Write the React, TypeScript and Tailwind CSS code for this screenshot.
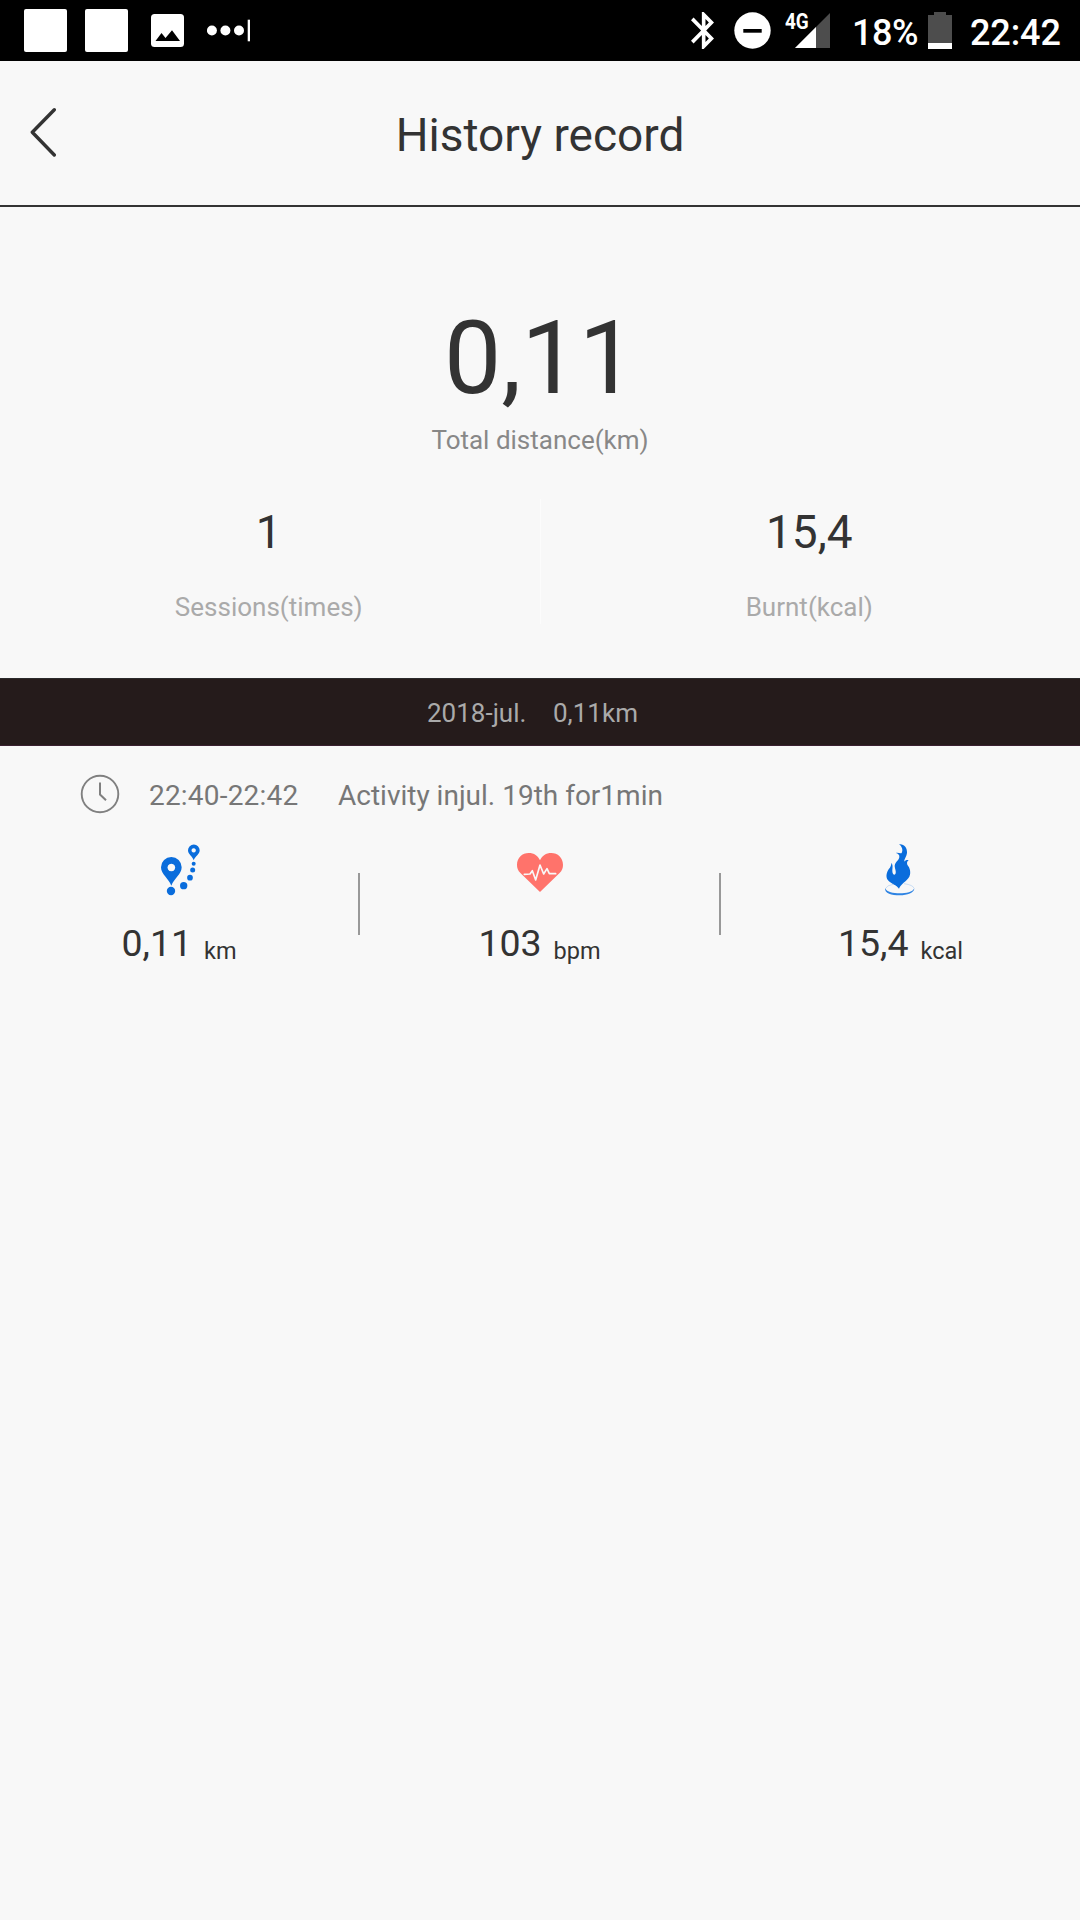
import React from "react";

function StatusBar() {
  return (
    <div className="flex h-[61px] items-center overflow-hidden bg-black pl-[24px] font-medium text-white">
      <div className="size-[43px] rounded-[2px] bg-white" />
      <div className="ml-[18px] size-[43px] rounded-[2px] bg-white" />
      <svg className="ml-[23px] h-[33px] w-[33px]" viewBox="0 0 33 33">
        <rect width="33" height="33" rx="3.5" fill="#fff" />
        <path d="M4.5 27 10.5 19 14.5 24 21 16.2 29 27Z" fill="#000" />
      </svg>
      <svg className="ml-[23px] h-[23px] w-[43px]" viewBox="0 0 43 23">
        <g fill="#fff">
          <circle cx="4.9" cy="11.5" r="5" />
          <circle cx="18.4" cy="11.5" r="5" />
          <circle cx="32" cy="11.5" r="5" />
          <rect x="40.7" y="0.7" width="2.3" height="21.6" />
        </g>
      </svg>
      <svg className="ml-[441px] h-[37px] w-[23px]" viewBox="5 2 12.71 20" preserveAspectRatio="none">
        <path
          fill="#fff"
          d="M17.71 7.71 12 2h-1v7.59L6.41 5 5 6.41 10.59 12 5 17.59 6.41 19 11 14.41V22h1l5.71-5.71-4.3-4.29 4.3-4.29zM13 5.83l1.88 1.88L13 9.59V5.83zm1.88 10.46L13 18.17v-3.76l1.88 1.88z"
        />
      </svg>
      <svg className="ml-[20px] h-[37px] w-[37px]" viewBox="0 0 37 37">
        <circle cx="18.5" cy="18.5" r="18.2" fill="#fff" />
        <rect x="9.3" y="17" width="18.4" height="3.7" fill="#000" />
      </svg>
      <div className="relative ml-[24px] h-[35px] w-[35px]">
        <svg className="block h-[35px] w-[35px]" viewBox="0 0 35 35">
          <path d="M0 35 35 0V35Z" fill="#4d4d4d" />
          <path d="M0 35 21 14V35Z" fill="#fff" />
        </svg>
        <span className="absolute top-[-3px] left-[-10px] origin-left scale-x-[0.86] text-[22px] leading-[24px] font-bold">4G</span>
      </div>
      <span className="mt-[6px] ml-[22px] w-[66px] text-[36px] leading-[55px] tracking-[-0.5px]">18%</span>
      <svg className="ml-[10px] h-[37px] w-[24px]" viewBox="0 0 24 37">
        <path d="M0 3H6V0H18V3H24V37H0Z" fill="#4d4d4d" />
        <rect y="31" width="24" height="6" fill="#fff" />
      </svg>
      <span className="mt-[6px] ml-[18px] text-[36px] leading-[55px] tracking-[-0.1px]">22:42</span>
    </div>
  );
}

function Header() {
  return (
    <header className="grid h-[146px] grid-cols-[90px_1fr_90px] border-b-2 border-[#333] text-[#333]">
      <svg className="mt-[46px] ml-[30px] h-[50px] w-[27px]" viewBox="0 0 27 50">
        <path d="M24.3 2.7 2.3 25.3 24.3 48" fill="none" stroke="#333" strokeWidth="3.4" strokeLinecap="round" strokeLinejoin="round" />
      </svg>
      <h1 className="text-center text-[46px] leading-[148px]">History record</h1>
    </header>
  );
}

function Total({ value, label }: { value: string; label: string }) {
  return (
    <div className="flex-1 pr-[2px] text-center">
      <div className="text-[46px] leading-[66px] text-[#333]">{value}</div>
      <div className="mt-[21px] text-[26px] leading-[42px] text-[#aaa]">{label}</div>
    </div>
  );
}

function Summary() {
  return (
    <section className="h-[471px] pt-[91px]">
      <div className="text-center text-[102px] leading-[120px] text-[#333]">0,11</div>
      <div className="mt-[1px] text-center text-[26px] leading-[42px] text-[#888]">Total distance(km)</div>
      <div className="mt-[38px] flex">
        <Total value="1" label="Sessions(times)" />
        <div className="h-[125px] w-px bg-[#fcfcfc]" />
        <Total value="15,4" label="Burnt(kcal)" />
      </div>
    </section>
  );
}

function RouteIcon() {
  return (
    <svg className="ml-[2px] h-[54px] w-[40px]" viewBox="300 249 120 162">
      <g fill="#0a6ddc">
        <path fillRule="evenodd" d="M334 377C326 356 303 342 303 322A31 31 0 0 1 365 322C365 342 342 356 334 377ZM334 311a11.5 11.5 0 1 0 .1 0Z" />
        <path fillRule="evenodd" d="M401 301C397 288 384 283 384 271A17.500 17.500 0 0 1 419 271C419 283 406 288 401 301ZM401 264.500a6.500 6.500 0 1 0 .1 0Z" />
        <circle cx="333" cy="393" r="12.500" />
        <circle cx="371" cy="377" r="11" />
        <circle cx="390" cy="353" r="8.500" />
        <circle cx="398" cy="330" r="7.500" />
        <circle cx="401" cy="311" r="6" />
      </g>
    </svg>
  );
}

function HeartIcon() {
  return (
    <svg className="mt-[5px] h-[39px] w-[46px]" viewBox="561 279 138 117">
      <path
        fill="#ff736b"
        d="M630 396 572 340C563 331 561 323 561 314C561 293 577 279 596 279C612 279 624 287 630 301C636 287 648 279 664 279C683 279 699 293 699 314C699 323 697 331 688 340Z"
      />
      <path
        d="M583 343 600 342 607 332 617 360 630 315 641 342 651 326 658 341H677"
        fill="none"
        stroke="#f8f8f8"
        strokeWidth="5"
        strokeLinecap="round"
        strokeLinejoin="round"
      />
    </svg>
  );
}

function FlameIcon() {
  return (
    <svg className="mr-[2px] mb-[2px] h-[53px] w-[31px]" viewBox="552 36 93 159">
      <path
        fill="#0a6ddc"
        d="M597 40C612 38 622 50 621 66C620 76 614 82 612 92C615 88 620 86 626 87C619 93 620 99 625 106C632 116 632 130 628 137C621 150 602 158 597 173C590 163 573 158 564 148C556 138 560 124 566 115C572 108 574 102 574 96C580 102 577 112 577 120C577 129 583 134 586 129C590 122 584 112 584 104C586 92 597 88 598 78C599 72 594 68 588 66C594 64 602 69 605 66C610 58 606 46 597 40Z"
      />
      <path d="M580 160Q560 163 557 172M612 158Q640 162 642 172" fill="none" stroke="#b4d0f2" strokeWidth="2" />
      <path d="M555 171C561 184 580 187 599 187C619 187 638 184 643 172C643 186 622 193 599 193C575 193 553 187 555 171Z" fill="#2f84e3" />
    </svg>
  );
}

function Stat({ icon, value, unit, className }: { icon: React.ReactNode; value: string; unit: string; className: string }) {
  return (
    <div className={className}>
      <div className="flex h-[58px] items-center justify-center">{icon}</div>
      <div className="mt-[19px] flex items-center justify-center text-[#333]">
        <span className="text-[37.5px] leading-[50px]">{value}</span>
        <span className="mt-[16px] ml-[12px] text-[23.5px] leading-[34px]">{unit}</span>
      </div>
    </div>
  );
}

function Activity() {
  return (
    <section>
      <div className="flex h-[95px] items-center pl-[80px] text-[28px] text-[#777]">
        <svg className="h-[40px] w-[40px]" viewBox="0 0 40 40">
          <g fill="none" stroke="#808080" strokeWidth="1.900">
            <circle cx="20" cy="20" r="18.300" />
            <path d="M20 8.500V20.500L26 26.300" strokeWidth="2" />
          </g>
        </svg>
        <span className="mt-[4px] ml-[29px] w-[189px] tracking-[0.2px]">22:40-22:42</span>
        <span className="mt-[4px]">Activity injul. 19th for1min</span>
      </div>
      <div className="flex">
        <Stat className="w-[358px]" icon={<RouteIcon />} value="0,11" unit="km" />
        <div className="mt-[32px] h-[62px] w-[2px] bg-[#999]" />
        <Stat className="w-[359px]" icon={<HeartIcon />} value="103" unit="bpm" />
        <div className="mt-[32px] h-[62px] w-[2px] bg-[#999]" />
        <Stat className="w-[359px]" icon={<FlameIcon />} value="15,4" unit="kcal" />
      </div>
    </section>
  );
}

export default function App() {
  return (
    <main className="h-[1920px] w-[1080px] overflow-hidden bg-[#f8f8f8] font-['Roboto',sans-serif]">
      <StatusBar />
      <Header />
      <Summary />
      <div className="flex h-[68px] border-y border-t-[#2b2a2c] border-b-[#3a2030] bg-[#251b1b] pl-[427px] text-[26px] leading-[68px] text-[#aaa]">
        <span className="w-[126px]">2018-jul.</span>
        <span>0,11km</span>
      </div>
      <Activity />
    </main>
  );
}
